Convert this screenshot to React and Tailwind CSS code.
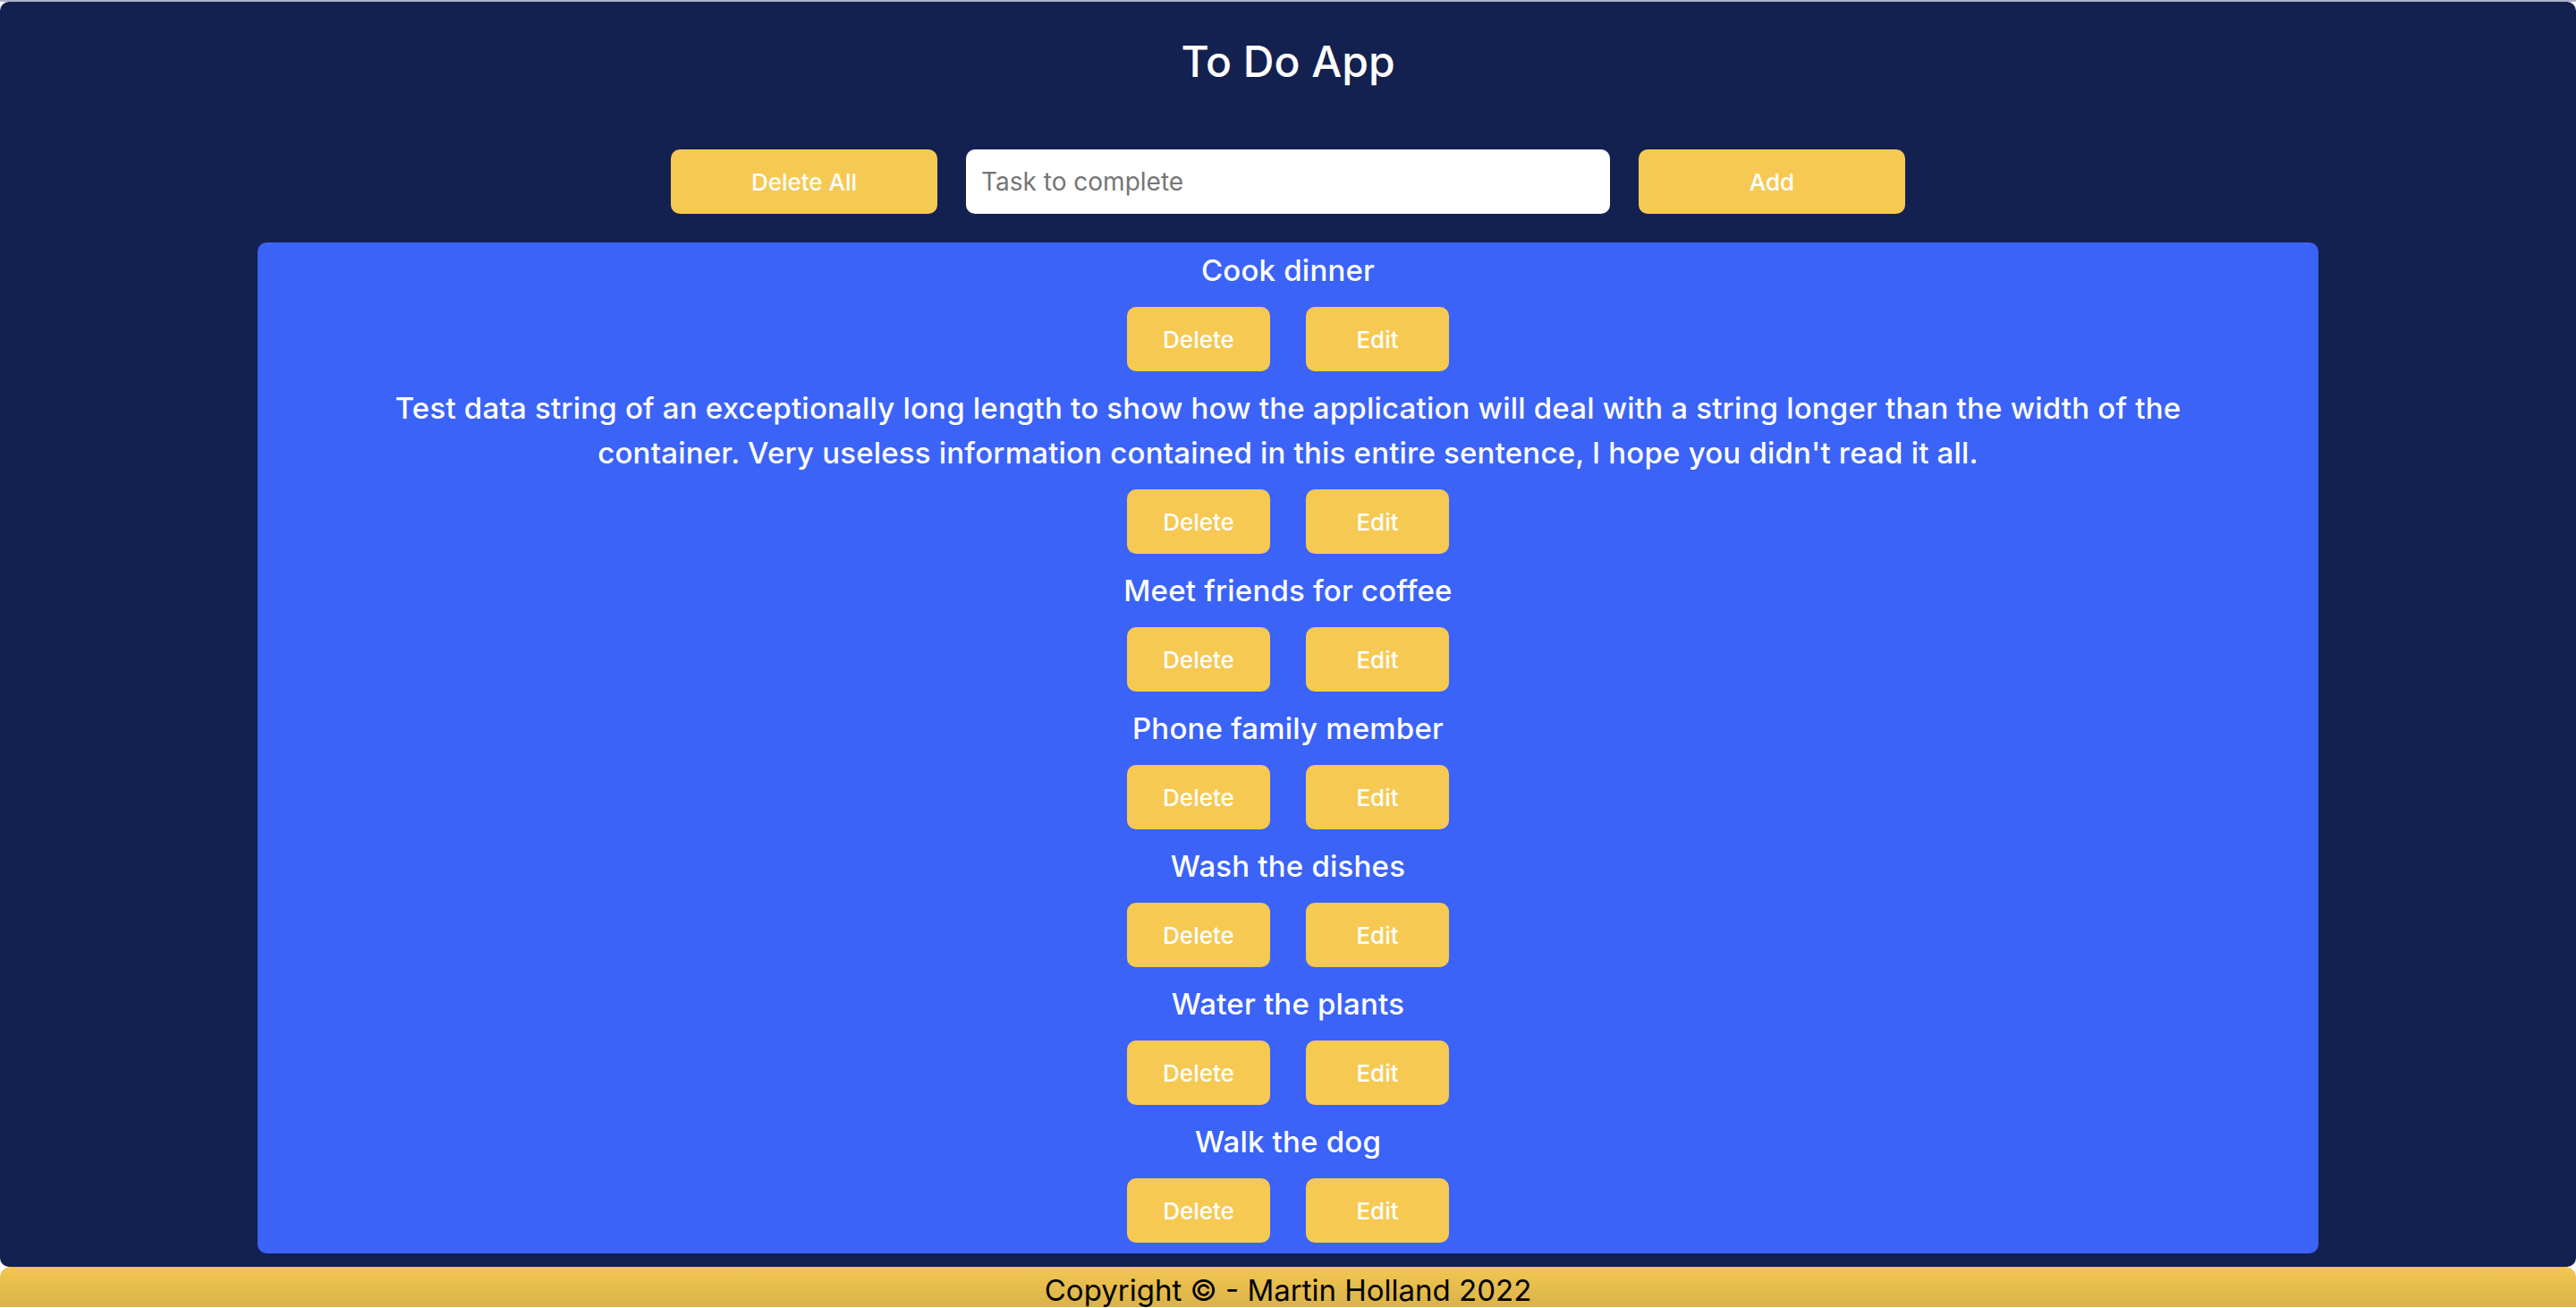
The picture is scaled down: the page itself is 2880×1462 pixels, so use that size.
import React from "react";

const tasks = [
  "Cook dinner",
  "Test data string of an exceptionally long length to show how the application will deal with a string longer than the width of the container. Very useless information contained in this entire sentence, I hope you didn't read it all.",
  "Meet friends for coffee",
  "Phone family member",
  "Wash the dishes",
  "Water the plants",
  "Walk the dog",
];

const font = { fontFamily: "Inter, 'Open Sans', sans-serif" };

export default function App() {
  return (
    <div className="bg-white h-[1462px] overflow-hidden" style={font}>
      <div className="h-[2px] bg-[#aab3c8]" />
      <div className="bg-[#132151] rounded-[10px] pt-[32px] pb-[15px] flex flex-col items-center">
        <h1 className="text-white text-[48px] leading-[69px] font-medium">To Do App</h1>
        <div className="mt-[64px] flex items-center gap-[32px]">
          <button className="w-[298px] h-[72px] rounded-[10px] bg-[#f6c953] text-white text-[26px] font-medium">
            Delete All
          </button>
          <input
            className="w-[720px] h-[72px] rounded-[10px] bg-white px-[17px] text-[28px] text-[#333] placeholder:text-[#757575] outline-none"
            placeholder="Task to complete"
          />
          <button className="w-[298px] h-[72px] rounded-[10px] bg-[#f6c953] text-white text-[26px] font-medium">
            Add
          </button>
        </div>
        <div className="mt-[32px] w-[2304px] bg-[#3b63f7] rounded-[10px] pt-[6px] pb-[12px] flex flex-col items-center gap-[16px]">
          {tasks.map((t) => (
            <div key={t} className="flex flex-col items-center">
              <p className="px-[100px] text-center text-white text-[33px] leading-[50px] font-medium tracking-[0.2px]">{t}</p>
              <div className="mt-[16px] flex gap-[40px]">
                <button className="w-[160px] h-[72px] rounded-[10px] bg-[#f6c953] text-white text-[26px] font-medium">
                  Delete
                </button>
                <button className="w-[160px] h-[72px] rounded-[10px] bg-[#f6c953] text-white text-[26px] font-medium">
                  Edit
                </button>
              </div>
            </div>
          ))}
        </div>
      </div>
      <div className="h-[45px] overflow-hidden rounded-t-[12px] bg-gradient-to-b from-[#f3c651] to-[#d9b34a] flex justify-center">
        <p className="text-black text-[33px] leading-[44px] mt-[4px]">Copyright © - Martin Holland 2022</p>
      </div>
    </div>
  );
}
